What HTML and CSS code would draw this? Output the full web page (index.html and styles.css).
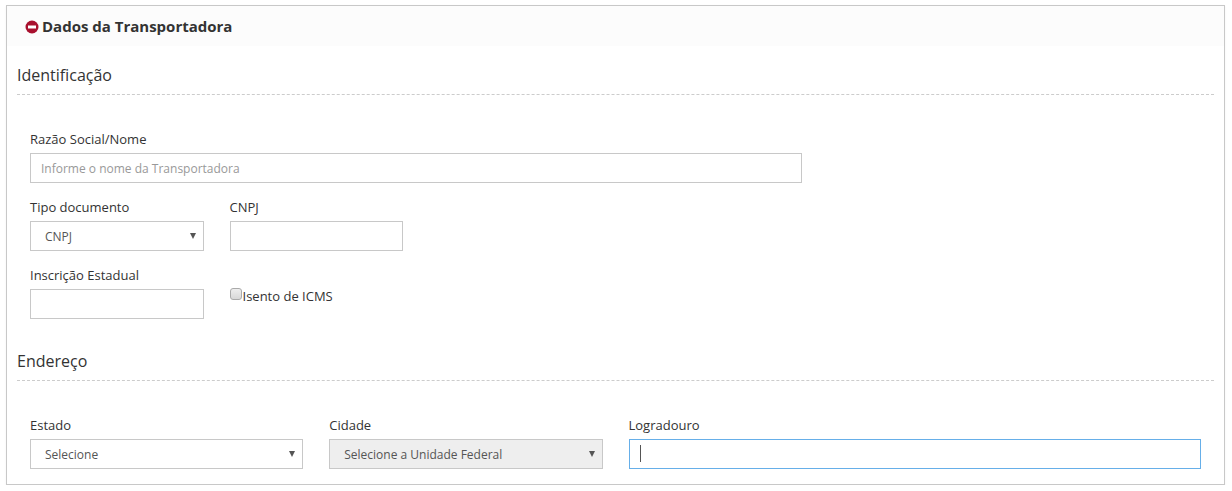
FILE: index.html
```html
<!DOCTYPE html>
<html lang="pt-BR">
<head>
<meta charset="utf-8">
<title>Dados da Transportadora</title>
<link rel="stylesheet" href="styles.css">
</head>
<body>
<section class="panel">
  <header class="panel-head">
    <svg class="head-icon" viewBox="0 0 14 14" aria-hidden="true"><circle cx="7" cy="7" r="6.5" fill="#a8102e"/><rect x="3" y="5.5" width="8" height="3" fill="#fff"/></svg>
    <h1 class="panel-title">Dados da Transportadora</h1>
  </header>
  <div class="panel-body">
    <h2 class="section-title">Identificação</h2>
    <div class="row row-first">
      <div class="col span-8">
        <label class="label">Razão Social/Nome</label>
        <input class="control" type="text" placeholder="Informe o nome da Transportadora">
      </div>
    </div>
    <div class="row">
      <div class="col span-2">
        <label class="label">Tipo documento</label>
        <div class="select-wrap"><select class="control select"><option>CNPJ</option></select></div>
      </div>
      <div class="col span-2">
        <label class="label">CNPJ</label>
        <input class="control" type="text">
      </div>
    </div>
    <div class="row">
      <div class="col span-2">
        <label class="label">Inscrição Estadual</label>
        <input class="control" type="text">
      </div>
      <div class="col span-2">
        <label class="check-label"><input class="check" type="checkbox">Isento de ICMS</label>
      </div>
    </div>
    <h2 class="section-title section-second">Endereço</h2>
    <div class="row row-address">
      <div class="col span-3">
        <label class="label">Estado</label>
        <div class="select-wrap"><select class="control select"><option>Selecione</option></select></div>
      </div>
      <div class="col span-3">
        <label class="label">Cidade</label>
        <div class="select-wrap"><select class="control select" disabled><option>Selecione a Unidade Federal</option></select></div>
      </div>
      <div class="col span-6">
        <label class="label">Logradouro</label>
        <div class="focus-wrap"><input class="control control-focus" type="text"><span class="caret"></span></div>
      </div>
    </div>
  </div>
</section>
</body>
</html>
```
FILE: styles.css
```css
* { box-sizing: border-box; }
html, body { margin: 0; background: #fff; }
body {
  padding: 5px 7px 0 6px;
  font-family: "Open Sans", "Liberation Sans", sans-serif;
  font-size: 13px;
  color: #333;
}
.panel {
  height: 480px;
  border: 1px solid #c8c8c8;
  box-shadow: 0 1px 2px rgba(0, 0, 0, 0.06);
}
.panel-head {
  height: 40px;
  background: #fcfcfc;
  display: flex;
  align-items: center;
  gap: 3px;
  padding: 1px 0 0 18px;
}
.head-icon { width: 14px; height: 14px; display: block; }
.panel-title { margin: 0 0 2px; font-size: 15px; font-weight: 700; color: #333; line-height: 20px; }
.panel-body { padding: 17px 10px 0; }
.section-title {
  margin: 0;
  height: 32px;
  font-size: 16px;
  font-weight: 400;
  line-height: 24px;
  color: #333;
  border-bottom: 1px dashed #ccc;
}
.section-second { margin-top: 30px; }
.row { display: grid; grid-template-columns: repeat(12, 1fr); margin-bottom: 15px; }
.row-first { margin-top: 35px; }
.row-address { margin-top: 35px; margin-bottom: 0; }
.col { padding: 0 13px; min-width: 0; }
.span-2 { grid-column: span 2; }
.span-3 { grid-column: span 3; }
.span-6 { grid-column: span 6; }
.span-8 { grid-column: span 8; }
.label { display: block; height: 23px; line-height: 18px; font-size: 13px; color: #333; }
.control {
  display: block;
  width: 100%;
  height: 30px;
  padding: 0 10px;
  border: 1px solid #c8c8c8;
  border-radius: 0;
  background: #fff;
  font-family: inherit;
  font-size: 12px;
  color: #555;
  outline: none;
}
.control::placeholder { color: #999; opacity: 1; }
.select { appearance: none; -webkit-appearance: none; padding-left: 14px; opacity: 1; }
.select:disabled { background: #eee; color: #555; }
.select-wrap, .focus-wrap { position: relative; }
.select-wrap::after {
  content: "";
  position: absolute;
  right: 8px;
  top: 12px;
  border-left: 3px solid transparent;
  border-right: 3px solid transparent;
  border-top: 6px solid #555;
  pointer-events: none;
}
.control-focus { border-color: #66afe9; }
.caret { position: absolute; left: 11px; top: 6px; width: 1px; height: 17px; background: #555; }
.check-label { display: flex; align-items: flex-start; height: 53px; padding-top: 21px; line-height: 18px; font-size: 13px; color: #333; }
.check {
  appearance: none;
  -webkit-appearance: none;
  flex: none;
  width: 12px;
  height: 12px;
  margin: 1px 1px 0 0;
  border: 1px solid #aaa;
  border-radius: 3px;
  background: linear-gradient(#eee, #d8d8d8);
}
```
